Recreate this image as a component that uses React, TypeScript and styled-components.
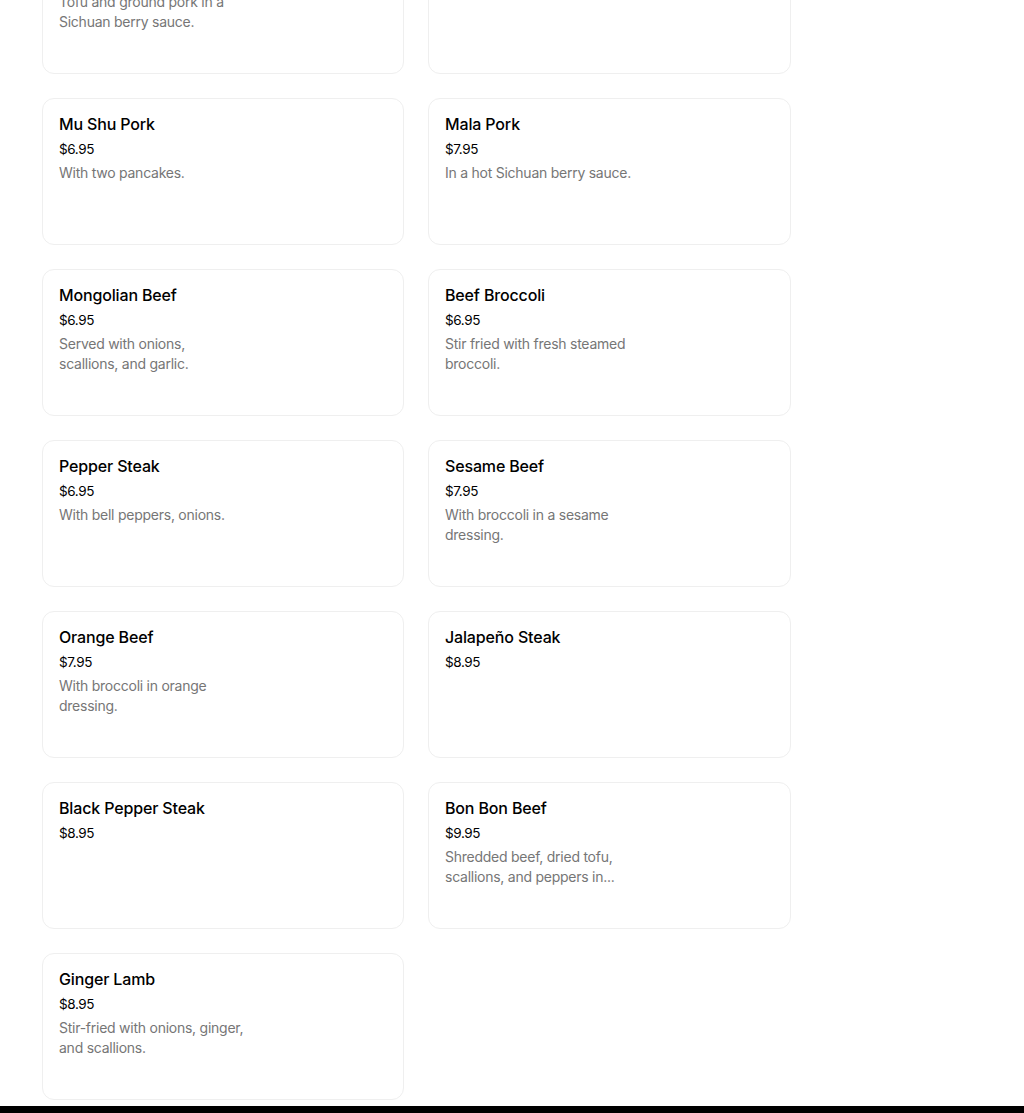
import React from "react";
import styled, { createGlobalStyle } from "styled-components";

const GlobalStyle = createGlobalStyle`
  html, body {
    margin: 0;
    padding: 0;
    background: #ffffff;
    overflow: hidden;
  }
  body {
    font-family: Inter, "Noto Sans", "Liberation Sans", sans-serif;
    color: #000000;
  }
`;

const Page = styled.div`
  height: 1113px;
  display: flex;
  flex-direction: column;
  overflow: hidden;
`;

const Main = styled.main`
  flex: 1;
  overflow: hidden;
  padding: 0 0 0 42px;
`;

const Grid = styled.div`
  margin-top: -73px;
  width: 749px;
  display: grid;
  grid-template-columns: 362px 363px;
  column-gap: 24px;
  row-gap: 24px;
`;

const Card = styled.div`
  box-sizing: border-box;
  height: 147px;
  border: 1px solid #efefef;
  border-radius: 12px;
  padding: 15px 16px 16px;
  display: flex;
  flex-direction: column;
`;

const Title = styled.div`
  font-size: 16px;
  line-height: 20px;
  font-weight: 500;
  letter-spacing: -0.15px;
  color: #000000;
`;

const Price = styled.div`
  margin-top: 5px;
  font-size: 13.5px;
  line-height: 20px;
  letter-spacing: -0.4px;
  color: #000000;
`;

const Desc = styled.div`
  margin-top: 4px;
  display: flex;
  flex-direction: column;
  font-size: 14px;
  line-height: 20px;
  letter-spacing: -0.25px;
  color: #767676;
`;

const Line = styled.span`
  display: block;
  white-space: nowrap;
`;

const Footer = styled.footer`
  height: 7px;
  background: #000000;
  flex: none;
`;

type Item = { name: string; price: string; desc?: string[] };

const items: Item[] = [
  { name: "Ma Po Tofu", price: "$6.95", desc: ["Tofu and ground pork in a", "Sichuan berry sauce."] },
  { name: "Twice Cooked Pork", price: "$6.95" },
  { name: "Mu Shu Pork", price: "$6.95", desc: ["With two pancakes."] },
  { name: "Mala Pork", price: "$7.95", desc: ["In a hot Sichuan berry sauce."] },
  { name: "Mongolian Beef", price: "$6.95", desc: ["Served with onions,", "scallions, and garlic."] },
  { name: "Beef Broccoli", price: "$6.95", desc: ["Stir fried with fresh steamed", "broccoli."] },
  { name: "Pepper Steak", price: "$6.95", desc: ["With bell peppers, onions."] },
  { name: "Sesame Beef", price: "$7.95", desc: ["With broccoli in a sesame", "dressing."] },
  { name: "Orange Beef", price: "$7.95", desc: ["With broccoli in orange", "dressing."] },
  { name: "Jalapeño Steak", price: "$8.95" },
  { name: "Black Pepper Steak", price: "$8.95" },
  {
    name: "Bon Bon Beef",
    price: "$9.95",
    desc: ["Shredded beef, dried tofu,", "scallions, and peppers in..."],
  },
  { name: "Ginger Lamb", price: "$8.95", desc: ["Stir-fried with onions, ginger,", "and scallions."] },
];

export default function App() {
  return (
    <>
      <GlobalStyle />
      <Page>
        <Main>
          <Grid>
            {items.map((it) => (
              <Card key={it.name}>
                <Title>{it.name}</Title>
                <Price>{it.price}</Price>
                {it.desc && (
                  <Desc>
                    {it.desc.map((l) => (
                      <Line key={l}>{l}</Line>
                    ))}
                  </Desc>
                )}
              </Card>
            ))}
          </Grid>
        </Main>
        <Footer />
      </Page>
    </>
  );
}
